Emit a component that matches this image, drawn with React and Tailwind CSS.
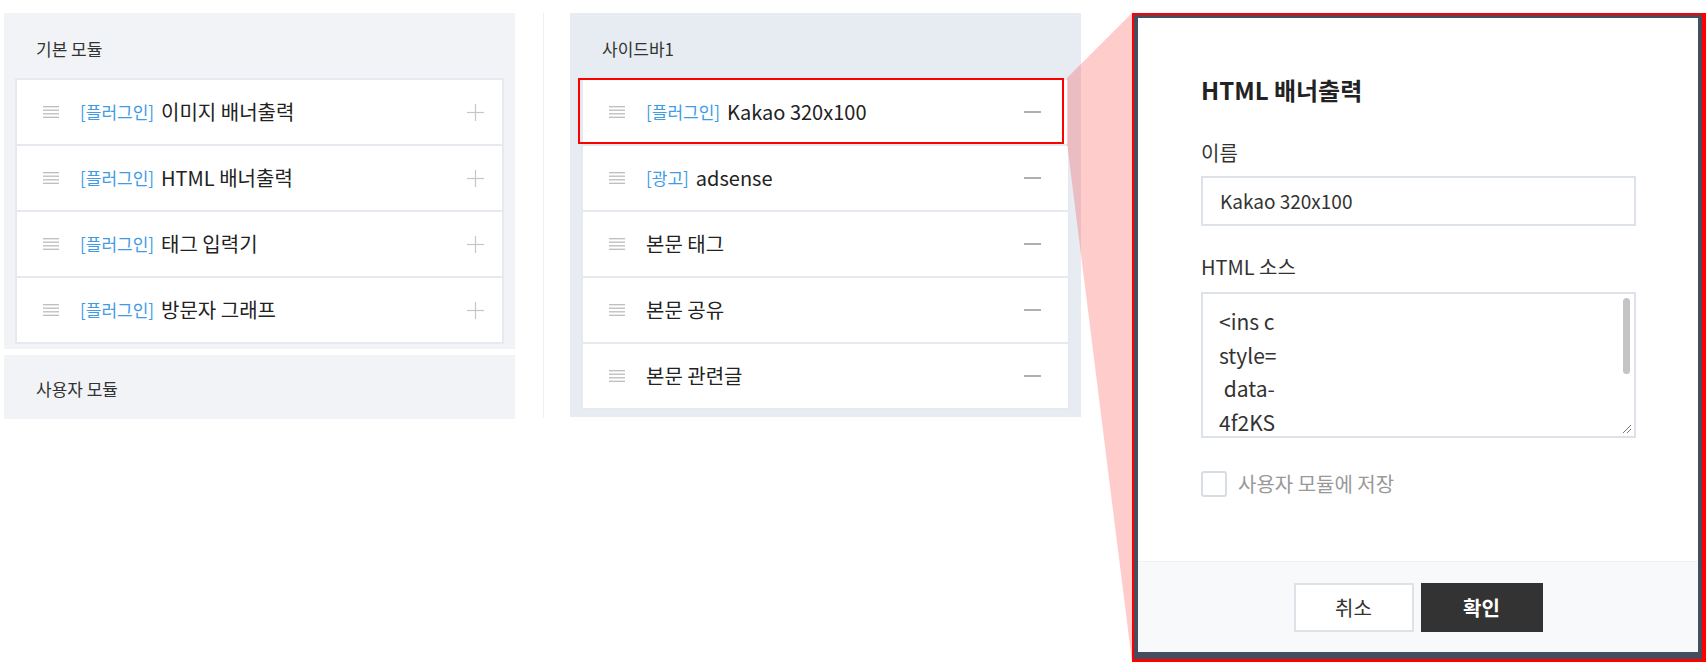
import React from 'react';

const DragIcon = () => (
  <svg width="16" height="12" viewBox="0 0 16 12" className="shrink-0">
    <g stroke="#bcbcbc" strokeWidth="1.3">
      <line x1="0" y1="0.7" x2="16" y2="0.7" />
      <line x1="0" y1="4.2" x2="16" y2="4.2" />
      <line x1="0" y1="7.8" x2="16" y2="7.8" />
      <line x1="0" y1="11.3" x2="16" y2="11.3" />
    </g>
  </svg>
);

const PlusIcon = () => (
  <svg width="17" height="17" viewBox="0 0 17 17">
    <g stroke="#c6c6c6" strokeWidth="1.2">
      <line x1="8.5" y1="0" x2="8.5" y2="17" />
      <line x1="0" y1="8.5" x2="17" y2="8.5" />
    </g>
  </svg>
);

const MinusIcon = () => (
  <svg width="17" height="4" viewBox="0 0 17 4">
    <line x1="0" y1="2" x2="17" y2="2" stroke="#9c9c9c" strokeWidth="1.6" />
  </svg>
);

const Row = ({ tag, name, action, actionPad, highlight }) => (
  <div className={`relative flex h-[64px] items-center bg-white pl-[26px] ${actionPad}`}>
    <DragIcon />
    <div className="ml-[21px] flex items-center">
      {tag && <span className="mr-[7px] text-[17px] text-[#3f9be6]">{tag}</span>}
      <span className="text-[20px] text-[#222]">{name}</span>
    </div>
    <div className="ml-auto flex items-center">{action}</div>
    {highlight && (
      <div className="absolute -left-[5px] right-[4px] -top-[2px] bottom-0 border-2 border-[#ff0000]" />
    )}
  </div>
);

const List = ({ rows, action, actionPad }) => (
  <div className="mx-[11px] flex flex-col gap-[2px] border-2 border-[#e6eaf0] bg-[#e6eaf0]">
    {rows.map((r) => (
      <Row key={r.name} {...r} action={action} actionPad={actionPad} />
    ))}
  </div>
);

const PanelTitle = ({ children }) => (
  <div className="h-[65px] pl-[32px] pt-[25px] text-[17px] leading-[22px] text-[#333]">{children}</div>
);

const basicRows = [
  { tag: '[플러그인]', name: '이미지 배너출력' },
  { tag: '[플러그인]', name: 'HTML 배너출력' },
  { tag: '[플러그인]', name: '태그 입력기' },
  { tag: '[플러그인]', name: '방문자 그래프' },
];

const sidebarRows = [
  { tag: '[플러그인]', name: 'Kakao 320x100', highlight: true },
  { tag: '[광고]', name: 'adsense' },
  { name: '본문 태그' },
  { name: '본문 공유' },
  { name: '본문 관련글' },
];

const sourceLines = ['<ins c', 'style=', '\u00a0data-', '4f2KS'];

export default function App() {
  return (
    <div className="relative h-[662px] w-[1706px] overflow-hidden bg-white font-['Noto_Sans_CJK_KR','Noto_Sans',sans-serif]">
      <div className="flex items-start pl-[4px] pt-[13px]">
        {/* left column: module lists */}
        <div className="flex w-[511px] flex-col gap-[6px]">
          <div className="bg-[#f1f3f6] pb-[5px]">
            <PanelTitle>기본 모듈</PanelTitle>
            <List rows={basicRows} action={<PlusIcon />} actionPad="pr-[18px]" />
          </div>
          <div className="h-[64px] bg-[#f1f3f6] pl-[32px] pt-[23px] text-[17px] leading-[22px] text-[#333]">
            사용자 모듈
          </div>
        </div>

        <div className="ml-[28px] h-[405px] w-px bg-[#eef0f3]" />

        {/* sidebar panel */}
        <div className="ml-[26px] w-[511px] bg-[#e6ecf2] pb-[7px]">
          <PanelTitle>사이드바1</PanelTitle>
          <List rows={sidebarRows} action={<MinusIcon />} actionPad="pr-[27px]" />
        </div>

        {/* zoomed modal */}
        <div className="ml-[51px] flex h-[649px] w-[574px] flex-col border-b-[3px] border-l-2 border-r-[4px] border-t-2 border-[#ff0000] bg-[#454e5f] pb-[7px] pl-[4px] pr-[4px] pt-[3px]">
          <div className="flex flex-1 flex-col bg-white">
            <div className="flex-1 pl-[63px] pr-[62px] pt-[56px]">
              <div className="text-[24px] font-bold leading-[32px] text-[#222]">HTML 배너출력</div>
              <div className="mt-[34px] text-[20px] leading-[26px] text-[#333]">이름</div>
              <div className="mt-[10px] flex h-[50px] items-center border-2 border-[#dde2e9] pl-[17px] text-[19px] text-[#333]">
                Kakao 320x100
              </div>
              <div className="mt-[28px] text-[20px] leading-[26px] text-[#333]">HTML 소스</div>
              <div className="relative mt-[12px] h-[146px] border-2 border-[#dde2e9] pl-[16px] pt-[11px]">
                {sourceLines.map((l) => (
                  <div key={l} className="whitespace-pre text-[21px] leading-[33.5px] text-[#333]">
                    {l}
                  </div>
                ))}
                <div className="absolute right-[4px] top-[4px] h-[76px] w-[7px] rounded-full bg-[#c4c4c4]" />
                <svg className="absolute bottom-[2px] right-[2px]" width="10" height="10" viewBox="0 0 10 10">
                  <g stroke="#777" strokeWidth="1">
                    <line x1="9" y1="1" x2="1" y2="9" />
                    <line x1="9" y1="5" x2="5" y2="9" />
                  </g>
                </svg>
              </div>
              <div className="mt-[31px] flex items-center">
                <div className="h-[26px] w-[26px] rounded-[3px] border-2 border-[#d8dde5] bg-white" />
                <span className="ml-[11px] text-[20px] text-[#999]">사용자 모듈에 저장</span>
              </div>
            </div>
            <div className="flex h-[91px] justify-center gap-[7px] border-t border-[#eef0f3] bg-[#f8f9fb] pt-[21px]">
              <div className="flex h-[49px] w-[120px] items-center justify-center border-2 border-[#dde2e9] bg-white text-[20px] text-[#333]">
                취소
              </div>
              <div className="flex h-[49px] w-[122px] items-center justify-center bg-[#333] text-[20px] font-bold text-white">
                확인
              </div>
            </div>
          </div>
        </div>
      </div>

      {/* callout wedge linking the highlighted row to the zoomed modal */}
      <svg className="pointer-events-none absolute left-0 top-0" width="1706" height="662">
        <polygon points="1067,78 1132,13 1132,662 1067,143" fill="rgba(255,0,0,0.2)" />
      </svg>
    </div>
  );
}
